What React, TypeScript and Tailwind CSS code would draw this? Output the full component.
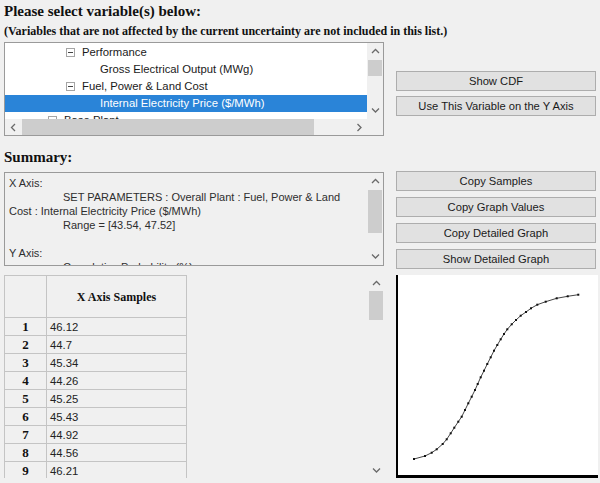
import React from 'react'

const sans = "font-['Liberation_Sans',Arial,sans-serif]"
const serif = "font-['Liberation_Serif','Times_New_Roman',serif]"

type TreeRow = { level: 0 | 1 | 2; label: string; expander?: boolean; selected?: boolean }

const treeRows: TreeRow[] = [
  { level: 1, label: 'Performance', expander: true },
  { level: 2, label: 'Gross Electrical Output (MWg)' },
  { level: 1, label: 'Fuel, Power & Land Cost', expander: true },
  { level: 2, label: 'Internal Electricity Price ($/MWh)', selected: true },
  { level: 0, label: 'Base Plant', expander: true },
]

const indent = { 0: 'pl-[43px]', 1: 'pl-[61px]', 2: 'pl-[95px]' }

const summaryLines = [
  'X Axis:',
  '\t\tSET PARAMETERS : Overall Plant : Fuel, Power & Land',
  'Cost : Internal Electricity Price ($/MWh)',
  '\t\tRange = [43.54, 47.52]',
  '',
  'Y Axis:',
  '\t\tCumulative Probability (%)',
]

const samples = ['46.12', '44.7', '45.34', '44.26', '45.25', '45.43', '44.92', '44.56', '46.21', '45.1']

const curve: [number, number][] = [
  [18, 184], [29, 181], [35.7, 177.7], [40.7, 174.3], [46.7, 169], [50.7, 164.3],
  [54.7, 158.3], [58.3, 152.7], [62.3, 146.7], [65.7, 141.7], [69, 135], [72.3, 128.3],
  [75.7, 121.7], [79, 115], [81.7, 109], [84.7, 102.3], [88, 95.7], [91.3, 89],
  [94.7, 82.3], [98, 75.7], [101.3, 70], [104.7, 64.3], [108, 59], [111.3, 54.3],
  [115.7, 49.3], [120, 45], [124.7, 40.7], [130, 37], [135, 33.3], [141.3, 29.7],
  [149.7, 26.7], [160.7, 23.3], [171.7, 21.3], [182.3, 19.7],
]

function Chevron({ dir }: { dir: 'up' | 'down' | 'left' | 'right' }) {
  const pts = {
    up: '1,5 4.5,1.5 8,5',
    down: '1,1.5 4.5,5 8,1.5',
    left: '5,1 1.5,4.5 5,8',
    right: '1.5,1 5,4.5 1.5,8',
  }[dir]
  const vertical = dir === 'up' || dir === 'down'
  return (
    <svg width={vertical ? 9 : 7} height={vertical ? 7 : 9} viewBox={vertical ? '0 0 9 7' : '0 0 7 9'}>
      <polyline points={pts} fill="none" stroke="#6a6a6a" strokeWidth="1.3" />
    </svg>
  )
}

function VScroll({ arrowH, thumb }: { arrowH: string; thumb: string }) {
  return (
    <div className="flex w-[16px] shrink-0 flex-col bg-[#f0f0f0]">
      <div className={`flex items-center justify-center ${arrowH}`}>
        <Chevron dir="up" />
      </div>
      <div className="flex-1">
        <div className={`mx-[1px] bg-[#cdcdcd] ${thumb}`} />
      </div>
      <div className={`flex items-center justify-center ${arrowH}`}>
        <Chevron dir="down" />
      </div>
    </div>
  )
}

function Button({ children }: { children: React.ReactNode }) {
  return (
    <div className={`flex h-[20px] w-[200px] items-center justify-center border border-[#adadad] bg-[#e1e1e1] text-[11.2px] text-[#1a1a1a] ${sans}`}>
      {children}
    </div>
  )
}

function VariableTree() {
  return (
    <div className="flex h-[94px] w-[380px] flex-col border border-[#9a9a9a] bg-white">
      <div className="flex h-[76px]">
        <div className="flex-1 overflow-hidden pt-[1px]">
          {treeRows.map((row) => (
            <div
              key={row.label}
              className={`flex h-[17px] items-center whitespace-nowrap text-[11.3px] ${sans} ${indent[row.level]} ${
                row.selected ? 'bg-[#2a84d8] text-white' : 'text-[#1a1a1a]'
              }`}
            >
              {row.expander && (
                <span className="mr-[7px] flex h-[9px] w-[9px] items-center justify-center border border-[#a5a5a5] bg-white">
                  <span className="h-[1px] w-[5px] bg-[#444]" />
                </span>
              )}
              {row.label}
            </div>
          ))}
        </div>
        <VScroll arrowH="h-[17px]" thumb="h-[16px]" />
      </div>
      <div className="flex h-[16px] bg-[#f0f0f0]">
        <div className="flex w-[17px] items-center justify-center">
          <Chevron dir="left" />
        </div>
        <div className="flex-1">
          <div className="h-full w-[292px] bg-[#cdcdcd]" />
        </div>
        <div className="flex w-[16px] items-center justify-center">
          <Chevron dir="right" />
        </div>
        <div className="w-[16px]" />
      </div>
    </div>
  )
}

function SummaryBox() {
  return (
    <div className="flex h-[94px] w-[380px] border border-[#9a9a9a] bg-[#f0f0f0]">
      <div className={`flex-1 overflow-hidden pl-[4px] pt-[3px] text-[11px] leading-[14px] text-[#2e2e2e] ${sans}`}>
        {summaryLines.map((line, i) => (
          <div key={i} className="h-[14px] whitespace-pre [tab-size:27px]">
            {line}
          </div>
        ))}
      </div>
      <VScroll arrowH="h-[17px]" thumb="h-[43px]" />
    </div>
  )
}

function SamplesTable() {
  return (
    <div className="flex h-[203px] w-[380px]">
      <div className="flex-1 overflow-hidden">
        <table className="w-[182px] table-fixed border-collapse bg-[#f0f0f0]">
          <colgroup>
            <col className="w-[42px]" />
            <col className="w-[140px]" />
          </colgroup>
          <thead>
            <tr className="h-[42px]">
              <th className="border border-[#c4c4c4]" />
              <th className={`border border-[#c4c4c4] text-[12px] font-bold text-[#111] ${serif}`}>X Axis Samples</th>
            </tr>
          </thead>
          <tbody>
            {samples.map((v, i) => (
              <tr key={i} className="h-[18px]">
                <td className={`border border-[#c4c4c4] p-0 text-center text-[13px] font-bold leading-[16px] text-[#111] ${serif}`}>
                  {i + 1}
                </td>
                <td className={`border border-[#c4c4c4] p-0 pl-[3px] text-[11.3px] leading-[16px] text-[#222] ${sans}`}>{v}</td>
              </tr>
            ))}
          </tbody>
        </table>
      </div>
      <VScroll arrowH="h-[16px]" thumb="h-[29px]" />
    </div>
  )
}

function CdfChart() {
  const d = curve.map(([x, y], i) => `${i ? 'L' : 'M'}${x} ${y}`).join(' ')
  return (
    <svg width="202" height="203" viewBox="0 0 202 203" className="block">
      <rect x="0" y="0" width="202" height="203" fill="#ffffff" />
      <rect x="0" y="0" width="2" height="203" fill="#000000" />
      <rect x="0" y="200" width="202" height="3" fill="#000000" />
      <path d={d} fill="none" stroke="#444444" strokeWidth="1" />
      {curve.map(([x, y], i) => (
        <rect key={i} x={x - 1} y={y - 1} width="2" height="2" fill="#111111" />
      ))}
    </svg>
  )
}

export default function App() {
  return (
    <div className="h-[483px] w-[600px] overflow-hidden bg-[#f0f0f0] pl-[4px]">
      <div className={`h-[22px] text-[15px] font-bold leading-[22px] text-[#111] ${serif}`}>
        Please select variable(s) below:
      </div>
      <div className={`h-[18px] whitespace-nowrap text-[12px] font-bold leading-[18px] text-[#111] ${serif}`}>
        (Variables that are not affected by the current uncertainty are not included in this list.)
      </div>

      <div className="mt-[2px] flex h-[94px] items-start gap-[12px]">
        <VariableTree />
        <div className="mt-[29px] flex flex-col gap-[5px]">
          <Button>Show CDF</Button>
          <Button>Use This Variable on the Y Axis</Button>
        </div>
      </div>

      <div className={`h-[36px] pt-[12px] text-[15px] font-bold leading-[18px] text-[#111] ${serif}`}>Summary:</div>

      <div className="flex h-[94px] items-start gap-[12px]">
        <SummaryBox />
        <div className="-mt-[1px] flex flex-col gap-[6px]">
          <Button>Copy Samples</Button>
          <Button>Copy Graph Values</Button>
          <Button>Copy Detailed Graph</Button>
          <Button>Show Detailed Graph</Button>
        </div>
      </div>

      <div className="mt-[9px] flex gap-[12px]">
        <SamplesTable />
        <CdfChart />
      </div>
    </div>
  )
}
